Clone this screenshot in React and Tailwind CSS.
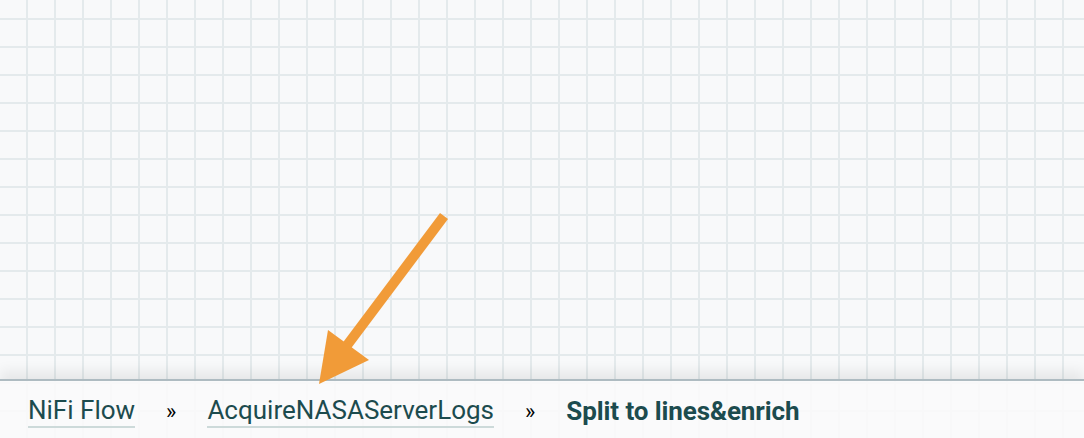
export default function App() {
  return (
    <div className="relative flex h-[438px] w-full flex-col overflow-hidden bg-[#f8f9fa] font-['Roboto',sans-serif]">
      {/* canvas grid */}
      <div className="flex-1 bg-[#f8f9fa] bg-[linear-gradient(to_right,#e4eaec_2px,transparent_2px),linear-gradient(to_bottom,#e4eaec_2px,transparent_2px)] bg-[size:28px_28px] bg-[position:26px_18px]" />

      {/* breadcrumb bar */}
      <div className="absolute inset-x-0 bottom-0 flex h-[59px] items-center gap-[31px] border-t-2 border-[#aebbc1] bg-[#f9fafb]/90 pl-[28px] pt-[4px] text-[26px] shadow-[0_-8px_12px_rgba(0,0,0,0.07)]">
        <span className="border-b-2 border-[#cddada] leading-[31px] text-[#1c4b4e]">NiFi Flow</span>
        <span className="text-[22px] text-black">»</span>
        <span className="border-b-2 border-[#cddada] leading-[31px] text-[#1c4b4e]">AcquireNASAServerLogs</span>
        <span className="text-[22px] text-black">»</span>
        <span className="font-bold leading-[31px] tracking-[-0.1px] text-[#1c4b4e]">Split to lines&amp;enrich</span>
      </div>

      {/* annotation arrow */}
      <svg className="pointer-events-none absolute inset-0" width="1084" height="438" viewBox="0 0 1084 438">
        <line x1="444" y1="216" x2="342" y2="352" stroke="#f19b38" strokeWidth="10" />
        <polygon points="319,384 328,330 369,360" fill="#f19b38" />
      </svg>
    </div>
  );
}
